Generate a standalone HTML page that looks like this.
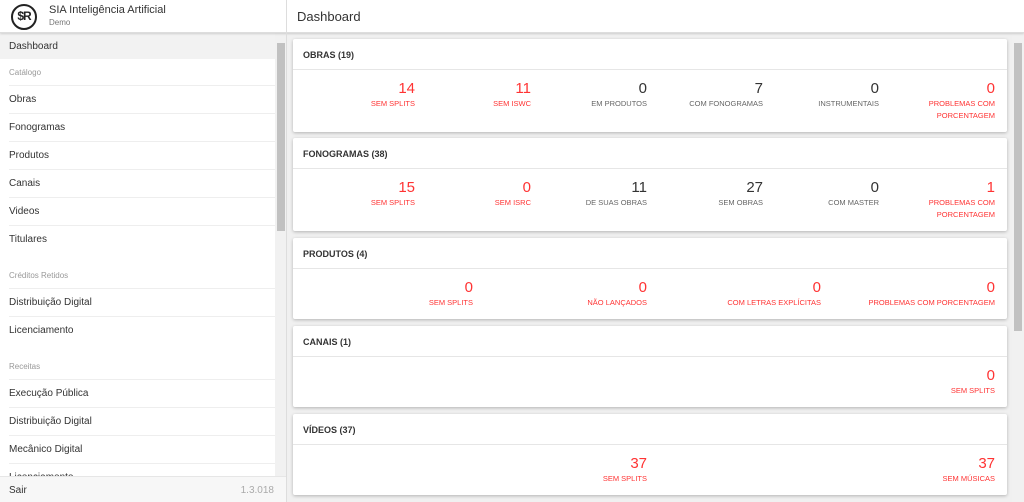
<!DOCTYPE html>
<html><head><meta charset="utf-8"><style>
*{box-sizing:border-box;margin:0;padding:0}
body{width:1024px;height:502px;overflow:hidden;font-family:"Liberation Sans",sans-serif;background:#f0f0f0;position:relative;color:#333}
.top{position:absolute;left:0;top:0;width:1024px;height:33px;background:#fff;border-bottom:1px solid #ddd;box-shadow:0 1px 2px rgba(0,0,0,.15);z-index:3}
.logo{position:absolute;left:11px;top:4px;width:26px;height:26px;border:2.5px solid #222;border-radius:50%;font-size:12px;font-weight:bold;text-align:center;line-height:21px;color:#222;letter-spacing:-1px}
.t1{position:absolute;left:49px;top:4px;font-size:11px;color:#333}
.t2{position:absolute;left:49px;top:18px;font-size:8px;color:#777}
.vl{position:absolute;left:286px;top:0;width:1px;height:502px;background:#ddd;z-index:4}
.title{position:absolute;left:297px;top:9px;font-size:13px;color:#333}
.side{position:absolute;left:0;top:33px;width:286px;height:469px;background:#fff}
.it{position:absolute;left:9px;font-size:10px;color:#333}
.sec{position:absolute;left:9px;font-size:8px;color:#999}
.dv{position:absolute;left:9px;width:266px;height:1px;background:#eee}
.sb{position:absolute;left:275px;top:33px;width:11px;height:443px;background:#f1f1f1}
.th{position:absolute;left:277px;top:43px;width:8px;height:188px;background:#c1c1c1}
.foot{position:absolute;left:0;top:476px;width:286px;height:26px;background:#f7f7f7;border-top:1px solid #e6e6e6}
.msb{position:absolute;left:1012px;top:33px;width:12px;height:469px;background:#f1f1f1}
.mth{position:absolute;left:1014px;top:43px;width:8px;height:288px;background:#c1c1c1}
.card{position:absolute;left:293px;width:714px;background:#fff;box-shadow:0 1px 3px rgba(0,0,0,.25);border-radius:2px}
.ch{height:31px;border-bottom:1px solid #e6e6e6;padding:11px 0 0 10px;font-size:9px;font-weight:bold;color:#333}
.row{display:flex;padding:11px 12px 0 6px}
.col{text-align:right}
.n{font-size:15px;line-height:16px}
.l{font-size:7.5px;line-height:12px;margin-top:1px;color:#666}
.r .n,.r .l{color:#f33}
.k .n{color:#333}
</style></head><body>
<div class="top">
<div class="logo">$R</div>
<div class="t1">SIA Inteligência Artificial</div>
<div class="t2">Demo</div>
<div class="title">Dashboard</div>
</div>
<div class="vl"></div>
<div class="side">
<div style="position:absolute;left:0;top:0;width:275px;height:26px;background:#f2f2f2"></div>
</div>
<div class="it" style="top:41px">Dashboard</div>
<div class="sec" style="top:68px">Catálogo</div>
<div class="dv" style="top:85px"></div>
<div class="it" style="top:94px">Obras</div>
<div class="dv" style="top:113px"></div>
<div class="it" style="top:122px">Fonogramas</div>
<div class="dv" style="top:141px"></div>
<div class="it" style="top:150px">Produtos</div>
<div class="dv" style="top:169px"></div>
<div class="it" style="top:178px">Canais</div>
<div class="dv" style="top:197px"></div>
<div class="it" style="top:206px">Videos</div>
<div class="dv" style="top:225px"></div>
<div class="it" style="top:234px">Titulares</div>
<div class="sec" style="top:271px">Créditos Retidos</div>
<div class="dv" style="top:288px"></div>
<div class="it" style="top:297px">Distribuição Digital</div>
<div class="dv" style="top:316px"></div>
<div class="it" style="top:325px">Licenciamento</div>
<div class="sec" style="top:362px">Receitas</div>
<div class="dv" style="top:379px"></div>
<div class="it" style="top:388px">Execução Pública</div>
<div class="dv" style="top:407px"></div>
<div class="it" style="top:416px">Distribuição Digital</div>
<div class="dv" style="top:435px"></div>
<div class="it" style="top:444px">Mecânico Digital</div>
<div class="dv" style="top:463px"></div>
<div class="it" style="top:472px">Licenciamento</div>
<div class="sb"></div><div class="th"></div>
<div class="foot"><span style="position:absolute;left:9px;top:8px;font-size:10px">Sair</span><span style="position:absolute;right:12px;top:8px;font-size:10px;color:#aaa">1.3.018</span></div>

<div class="card" style="top:39px;height:93px"><div class="ch">OBRAS (19)</div>
<div class="row">
<div class="col r" style="width:116px"><div class="n">14</div><div class="l">SEM SPLITS</div></div>
<div class="col r" style="width:116px"><div class="n">11</div><div class="l">SEM ISWC</div></div>
<div class="col k" style="width:116px"><div class="n">0</div><div class="l">EM PRODUTOS</div></div>
<div class="col k" style="width:116px"><div class="n">7</div><div class="l">COM FONOGRAMAS</div></div>
<div class="col k" style="width:116px"><div class="n">0</div><div class="l">INSTRUMENTAIS</div></div>
<div class="col r" style="width:116px"><div class="n">0</div><div class="l">PROBLEMAS COM<br>PORCENTAGEM</div></div>
</div></div>

<div class="card" style="top:138px;height:93px"><div class="ch">FONOGRAMAS (38)</div>
<div class="row">
<div class="col r" style="width:116px"><div class="n">15</div><div class="l">SEM SPLITS</div></div>
<div class="col r" style="width:116px"><div class="n">0</div><div class="l">SEM ISRC</div></div>
<div class="col k" style="width:116px"><div class="n">11</div><div class="l">DE SUAS OBRAS</div></div>
<div class="col k" style="width:116px"><div class="n">27</div><div class="l">SEM OBRAS</div></div>
<div class="col k" style="width:116px"><div class="n">0</div><div class="l">COM MASTER</div></div>
<div class="col r" style="width:116px"><div class="n">1</div><div class="l">PROBLEMAS COM<br>PORCENTAGEM</div></div>
</div></div>

<div class="card" style="top:238px;height:81px"><div class="ch">PRODUTOS (4)</div>
<div class="row">
<div class="col r" style="width:174px"><div class="n">0</div><div class="l">SEM SPLITS</div></div>
<div class="col r" style="width:174px"><div class="n">0</div><div class="l">NÃO LANÇADOS</div></div>
<div class="col r" style="width:174px"><div class="n">0</div><div class="l">COM LETRAS EXPLÍCITAS</div></div>
<div class="col r" style="width:174px"><div class="n">0</div><div class="l">PROBLEMAS COM PORCENTAGEM</div></div>
</div></div>

<div class="card" style="top:326px;height:81px"><div class="ch">CANAIS (1)</div>
<div class="row">
<div class="col r" style="width:696px"><div class="n">0</div><div class="l">SEM SPLITS</div></div>
</div></div>

<div class="card" style="top:414px;height:81px"><div class="ch">VÍDEOS (37)</div>
<div class="row">
<div class="col r" style="width:348px"><div class="n">37</div><div class="l">SEM SPLITS</div></div>
<div class="col r" style="width:348px"><div class="n">37</div><div class="l">SEM MÚSICAS</div></div>
</div></div>

<div class="msb"></div><div class="mth"></div>
</body></html>
